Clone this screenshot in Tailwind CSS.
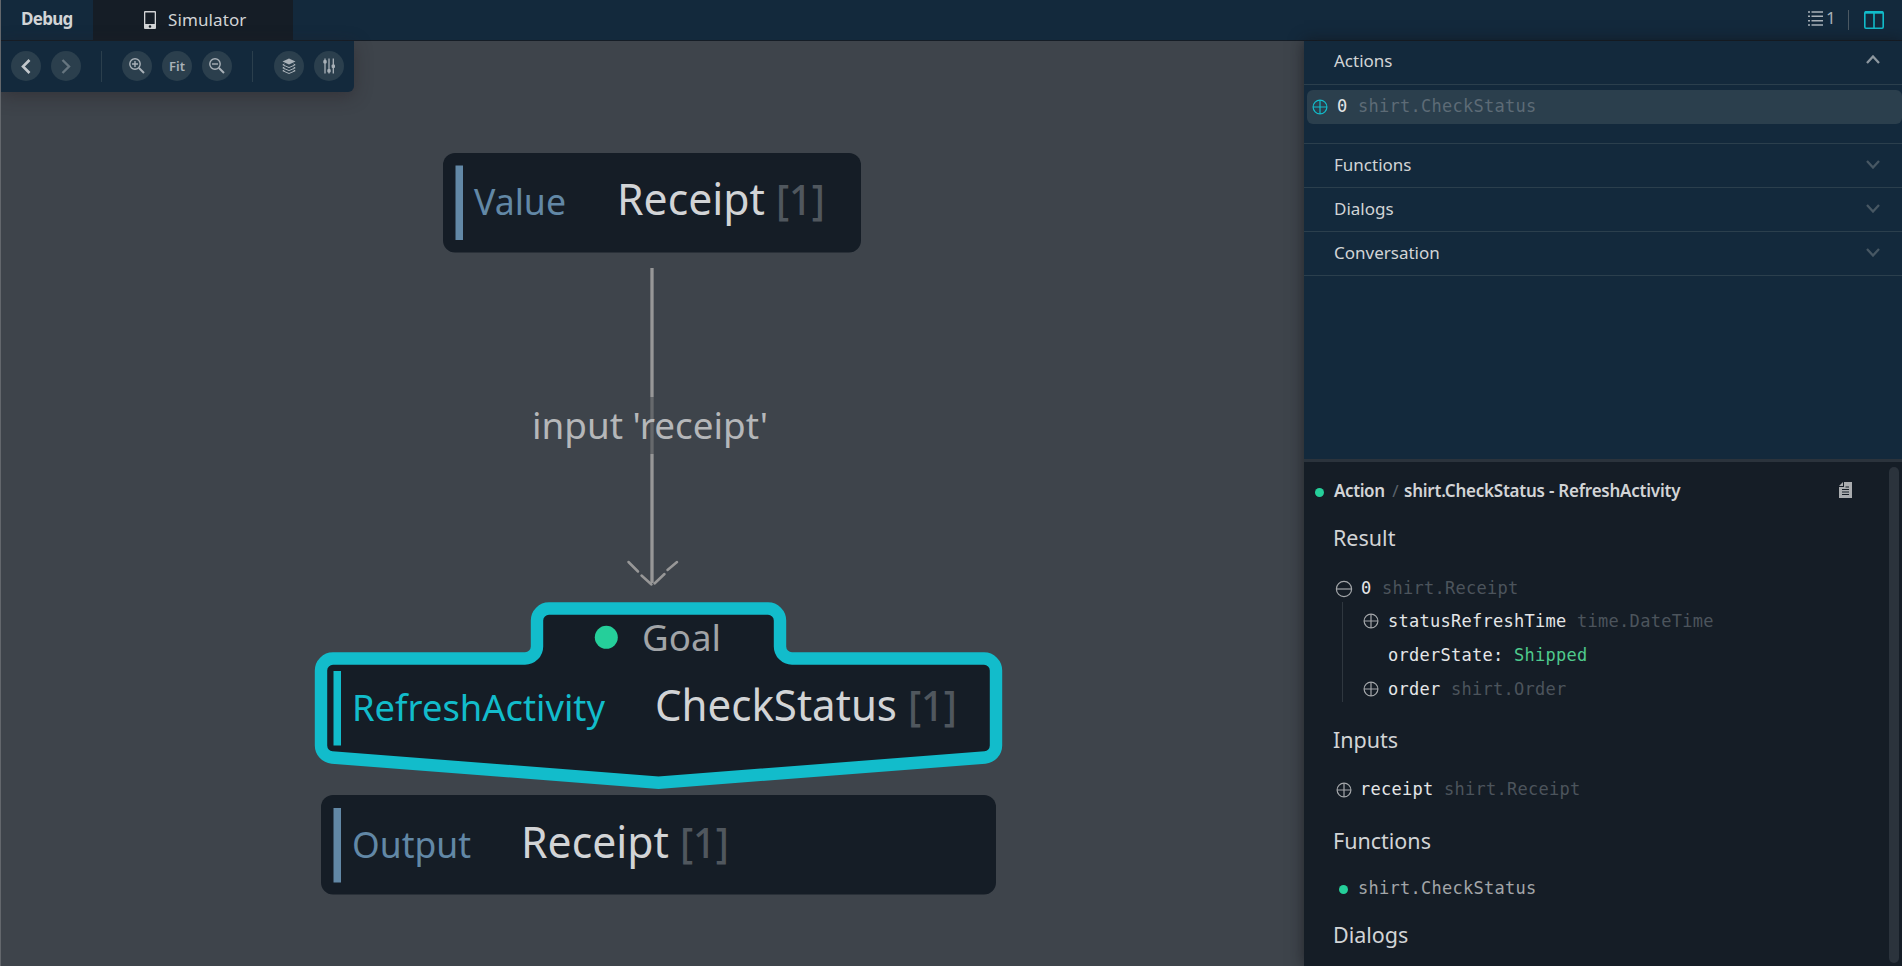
<!DOCTYPE html>
<html lang="en">
<head>
<meta charset="utf-8">
<title>Debug console</title>
<script src="https://cdn.jsdelivr.net/npm/@tailwindcss/browser@4"></script>
</head>
<body class="w-[1902px] h-[966px] overflow-hidden flex flex-col bg-[#3e444b] border-l border-[#63676c] font-['Noto_Sans',sans-serif] text-[17px] text-[#d2d4d6] whitespace-nowrap">

<svg class="hidden">
  <symbol id="plus" viewBox="0 0 16 16"><g fill="none" stroke="currentColor" stroke-width="1.2"><circle cx="8" cy="8" r="6.900"/><path d="M1 8H15M8 1V15"/></g></symbol>
  <symbol id="minus" viewBox="0 0 18 18"><g fill="none" stroke="currentColor" stroke-width="1.2"><circle cx="9" cy="9" r="7.6"/><path d="M1.500 9H16.500"/></g></symbol>
  <symbol id="down" viewBox="0 0 14 9"><path d="M1 1L7 7.500L13 1" fill="none" stroke="currentColor" stroke-width="2.300"/></symbol>
</svg>

<header class="h-[41px] shrink-0 flex bg-[#13293c] border-b border-[#151d26]">
  <div class="w-[92px] flex items-center pl-[20px] pb-[3px] font-bold tracking-[-0.7px]">Debug</div>
  <div class="w-[200px] bg-[#151d26] flex items-center pl-[51px]">
    <svg class="w-3 h-[18px]" viewBox="0 0 12 18"><path fill="#d2d4d6" fill-rule="evenodd" d="M1 0H11Q12 0 12 1V17Q12 18 11 18H1Q0 18 0 17V1Q0 0 1 0ZM1.300 1.500V13H10.700V1.500ZM6 14.200A1.300 1.300 0 1 0 6 16.800A1.300 1.300 0 1 0 6 14.200Z"/></svg>
    <span class="ml-3 pb-px tracking-[0.1px]">Simulator</span>
  </div>
  <div class="ml-auto flex items-center pr-[18px] pb-px">
    <svg class="w-[15px] h-4 mb-[2px]" viewBox="0 0 15 16"><path stroke="#a9b1b8" stroke-width="1.600" d="M0 1H2M3.500 1H15M0 5.300H2M3.500 5.300H15M0 9.700H2M3.500 9.700H15M0 14H2M3.500 14H15"/></svg>
    <span class="ml-[3px] w-[10px] text-[#a9b1b8] pb-[3px]">1</span>
    <span class="ml-[12px] w-px h-5 bg-[#4c5963]"></span>
    <svg class="ml-[15px] w-5 h-[18px]" viewBox="0 0 20 18"><g fill="none" stroke="#12bccb" stroke-width="1.600"><rect x=".8" y=".8" width="18.400" height="16.400" rx="1.200"/><path d="M10 2V17"/><path stroke-width="2.400" d="M1 1.500H19"/></g></svg>
  </div>
</header>

<div class="flex flex-1 min-h-0">
  <main class="relative flex-1 min-w-0">
    <svg class="block w-[1303px] h-[925px] font-['Noto_Sans',sans-serif]" viewBox="1 41 1303 925">
      <g fill="#151d26">
        <rect x="443" y="153" width="418" height="99.500" rx="12"/>
        <rect x="321" y="795" width="675" height="99.500" rx="12"/>
        <path stroke="#12bccb" stroke-width="12.400" d="M321 670.500A12 12 0 0 1 333 658.500H525A12 12 0 0 0 537 646.500V620.500A12 12 0 0 1 549 608.500H768A12 12 0 0 1 780 620.500V646.500A12 12 0 0 0 792 658.500H984A12 12 0 0 1 996 670.500V745.500A12 12 0 0 1 985 757.500L658.500 782.700L332 757.500A12 12 0 0 1 321 745.500Z"/>
      </g>
      <g fill="#6288a6"><rect x="455.500" y="165.500" width="7.500" height="74.500"/><rect x="333.500" y="808" width="7.500" height="74.500"/></g>
      <rect x="333.500" y="671" width="7.500" height="74.500" fill="#12bccb"/>
      <g fill="none" stroke="#979797" stroke-width="3.300">
        <path d="M652 268V397M652 454V583"/>
        <path stroke="#66696c" d="M652 397V454"/>
        <path stroke-width="2.500" stroke-linecap="round" d="M628.500 562L638 571.500M641.500 575.500L651.500 584.500M654.500 583.500L664.500 574M667.500 570L677 562"/>
      </g>
      <circle cx="606.300" cy="637.300" r="11.500" fill="#25cf9a"/>
      <g font-size="36">
        <text x="474" y="215" fill="#6288a6" textLength="92" lengthAdjust="spacingAndGlyphs">Value</text>
        <text x="532" y="439" fill="#b5b7b9" textLength="236" lengthAdjust="spacingAndGlyphs">input 'receipt'</text>
        <text x="642" y="651" fill="#a1a4a7" textLength="79" lengthAdjust="spacingAndGlyphs">Goal</text>
        <text x="352" y="721" fill="#12bccb" textLength="253" lengthAdjust="spacingAndGlyphs">RefreshActivity</text>
        <text x="352" y="858" fill="#6288a6" textLength="119" lengthAdjust="spacingAndGlyphs">Output</text>
      </g>
      <g font-size="43" fill="#d2d4d6">
        <text x="617" y="215" textLength="148" lengthAdjust="spacingAndGlyphs">Receipt</text>
        <text x="655" y="721" textLength="242" lengthAdjust="spacingAndGlyphs">CheckStatus</text>
        <text x="521" y="858" textLength="148" lengthAdjust="spacingAndGlyphs">Receipt</text>
      </g>
      <g font-size="42" font-weight="500" fill="#50575e">
        <text x="776" y="215" textLength="49" lengthAdjust="spacingAndGlyphs">[1]</text>
        <text x="908" y="721" textLength="49" lengthAdjust="spacingAndGlyphs">[1]</text>
        <text x="680" y="858" textLength="49" lengthAdjust="spacingAndGlyphs">[1]</text>
      </g>
    </svg>

    <nav class="absolute left-0 top-0 w-[353px] h-[51px] flex items-center pl-[10px] pb-px bg-[#13293c] rounded-br-md shadow-[0_4px_18px_rgba(40,30,35,0.45)] text-[#a9b1b8]">
      <span class="size-[30px] rounded-full bg-[#2b3f4d] flex items-center justify-center"><svg class="w-[10px] h-[15px]" viewBox="0 0 10 15"><path d="M8.500 1L2 7.500L8.500 14" fill="none" stroke="#c3c8cc" stroke-width="2.600"/></svg></span>
      <span class="ml-[10px] size-[30px] rounded-full bg-[#2b3f4d] flex items-center justify-center"><svg class="w-[10px] h-[15px]" viewBox="0 0 10 15"><path d="M1.500 1L8 7.500L1.500 14" fill="none" stroke="#66757f" stroke-width="2.400"/></svg></span>
      <span class="ml-[20px] w-px h-[31px] bg-[#2b3f4d]"></span>
      <span class="ml-[20px] size-[30px] rounded-full bg-[#2b3f4d] flex items-center justify-center"><svg class="size-4" viewBox="0 0 16 16"><g fill="none" stroke="currentColor" stroke-width="1.400"><circle cx="6" cy="6" r="5.200"/><path d="M3 6H9M6 3V9"/><path stroke-width="2" d="M10 10L15 15"/></g></svg></span>
      <span class="ml-[10px] size-[30px] rounded-full bg-[#2b3f4d] flex items-center justify-center text-[13px] font-semibold pt-px">Fit</span>
      <span class="ml-[10px] size-[30px] rounded-full bg-[#2b3f4d] flex items-center justify-center"><svg class="size-4" viewBox="0 0 16 16"><g fill="none" stroke="currentColor" stroke-width="1.400"><circle cx="6" cy="6" r="5.200"/><path d="M3 6H9"/><path stroke-width="2" d="M10 10L15 15"/></g></svg></span>
      <span class="ml-[20px] w-px h-[31px] bg-[#2b3f4d]"></span>
      <span class="ml-[21px] size-[30px] rounded-full bg-[#2b3f4d] flex items-center justify-center"><svg class="w-[14px] h-4" viewBox="0 0 14 16"><path fill="currentColor" d="M7 .5L13.500 3.500L7 6.500L.5 3.500Z"/><path fill="none" stroke="currentColor" d="M2.500 6L.8 6.800L7 9.600L13.200 6.800L11.500 6M2.500 9L.8 9.900L7 12.600L13.200 9.900L11.500 9M2.500 12L.8 12.800L7 15.500L13.200 12.800L11.500 12"/></svg></span>
      <span class="ml-[10px] size-[30px] rounded-full bg-[#2b3f4d] flex items-center justify-center"><svg class="w-3 h-4" viewBox="0 0 12 16"><g stroke="currentColor" stroke-width="1.300" fill="currentColor"><path d="M2 .5V15.500M6 .5V15.500M10.300 .5V15.500"/><g stroke="none"><rect x=".3" y="2" width="3.400" height="3.400" rx="1"/><rect x="4.300" y="11" width="3.400" height="3.400" rx="1"/><rect x="8.600" y="6.500" width="3.400" height="3.400" rx="1"/></g></g></svg></span>
    </nav>
  </main>

  <aside class="relative w-[598px] shrink-0 flex flex-col bg-[#13293c] shadow-[0_0_14px_rgba(20,20,25,0.65)]">
    <section class="h-[418px] shrink-0 flex flex-col">
      <div class="h-[44px] shrink-0 border-b border-[#2b3f4d] flex items-center justify-between pl-[30px] pr-[22px] pb-[3px]"><span>Actions</span><svg class="w-[14px] h-[9px] rotate-180 mb-[3px] text-[#8d979f]"><use href="#down"/></svg></div>
      <div class="h-[58px] shrink-0 pt-[5px] pl-[3px]">
        <div class="h-[34px] rounded-md bg-[#2b3f4d] flex items-center pl-[5px] font-['DejaVu_Sans_Mono',monospace] tracking-[0.27px]">
          <svg class="size-4 text-[#12bccb]"><use href="#plus"/></svg><span class="ml-[9px] pb-px whitespace-pre text-[#5d6b76]"><span class="text-[#e4e6e8]">0</span> shirt.CheckStatus</span>
        </div>
      </div>
      <div class="h-[45px] shrink-0 border-y border-[#2b3f4d] flex items-center justify-between pl-[30px] pr-[22px] pb-[2px]"><span>Functions</span><svg class="w-[14px] h-[9px] text-[#475763]"><use href="#down"/></svg></div>
      <div class="h-[44px] shrink-0 border-b border-[#2b3f4d] flex items-center justify-between pl-[30px] pr-[22px] pb-[2px]"><span>Dialogs</span><svg class="w-[14px] h-[9px] text-[#475763]"><use href="#down"/></svg></div>
      <div class="h-[44px] shrink-0 border-b border-[#2b3f4d] flex items-center justify-between pl-[30px] pr-[22px] pb-[2px]"><span>Conversation</span><svg class="w-[14px] h-[9px] text-[#475763]"><use href="#down"/></svg></div>
    </section>

    <section class="flex-1 min-h-0 flex justify-between bg-[#151d26] border-t-3 border-[#2b333c]">
      <div class="flex-1 flex flex-col">
        <div class="h-[60px] shrink-0 flex items-center pl-[11px] pr-[37px] pb-[2px] font-semibold">
          <span class="size-[9px] mt-[3px] rounded-full bg-[#25cf9a]"></span>
          <span class="ml-[10px] w-[51px] tracking-[-0.4px]">Action</span>
          <span class="ml-[5px] w-[11px] text-center font-normal text-[#5b636b]">/</span>
          <span class="ml-[3px] tracking-[-0.23px]">shirt.CheckStatus - RefreshActivity</span>
          <svg class="ml-auto w-[13px] h-4 mb-[2px]" viewBox="0 0 13 16"><path fill="#a9acaf" d="M5 0H13V16H0V5H5Z"/><path fill="#a9acaf" d="M0 4L4 0V4Z"/><path stroke="#151d26" stroke-width="1.100" d="M3 7.500H10M3 10H10M3 12.500H10M6.500 5H10"/></svg>
        </div>
        <h2 class="h-[32px] leading-[32px] pl-[29px] text-[21.5px]">Result</h2>

        <div class="mt-[18px] font-['DejaVu_Sans_Mono',monospace] tracking-[0.27px] text-[#4c545c]">
          <div class="h-[34px] flex items-center pl-[31px]"><svg class="size-[18px] text-[#a3a6a9]"><use href="#minus"/></svg><span class="ml-[8px] pb-px whitespace-pre"><span class="text-[#e4e6e8]">0</span> shirt.Receipt</span></div>
          <div class="ml-[38px] border-l border-[#2f373f] h-[100px] -mt-[4px] pt-[2px] flex flex-col">
            <div class="h-[34px] shrink-0 flex items-center pl-[20px]"><svg class="size-4 text-[#a3a6a9]"><use href="#plus"/></svg><span class="ml-[9px] pt-px whitespace-pre"><span class="text-[#e4e6e8]">statusRefreshTime</span> time.DateTime</span></div>
            <div class="h-[34px] shrink-0 flex items-center pl-[45px]"><span class="pt-px whitespace-pre text-[#e4e6e8]">orderState: <span class="text-[#4fca8d]">Shipped</span></span></div>
            <div class="h-[34px] shrink-0 flex items-center pl-[20px]"><svg class="size-4 text-[#a3a6a9]"><use href="#plus"/></svg><span class="ml-[9px] pt-px whitespace-pre"><span class="text-[#e4e6e8]">order</span> shirt.Order</span></div>
          </div>
        </div>

        <h2 class="mt-[22px] h-[32px] leading-[32px] pl-[29px] text-[21.5px]">Inputs</h2>
        <div class="mt-[17px] h-[34px] flex items-center pl-[32px] font-['DejaVu_Sans_Mono',monospace] tracking-[0.27px] text-[#4c545c]"><svg class="size-4 text-[#a3a6a9]"><use href="#plus"/></svg><span class="ml-[8px] whitespace-pre"><span class="text-[#e4e6e8]">receipt</span> shirt.Receipt</span></div>

        <h2 class="mt-[18px] h-[32px] leading-[32px] pl-[29px] text-[21.5px]">Functions</h2>
        <div class="mt-[15px] h-[34px] flex items-center pl-[35px] font-['DejaVu_Sans_Mono',monospace] tracking-[0.27px] text-[#a3a6a9]"><span class="size-[9px] mt-px rounded-full bg-[#25cf9a]"></span><span class="ml-[10px]">shirt.CheckStatus</span></div>

        <h2 class="mt-[13px] h-[32px] leading-[32px] pl-[29px] text-[21.5px]">Dialogs</h2>
      </div>
      <div class="w-[10px] mt-[5px] mb-[3px] mr-[3px] rounded-full bg-[#2b333c]"></div>
    </section>
  </aside>
</div>
</body>
</html>
